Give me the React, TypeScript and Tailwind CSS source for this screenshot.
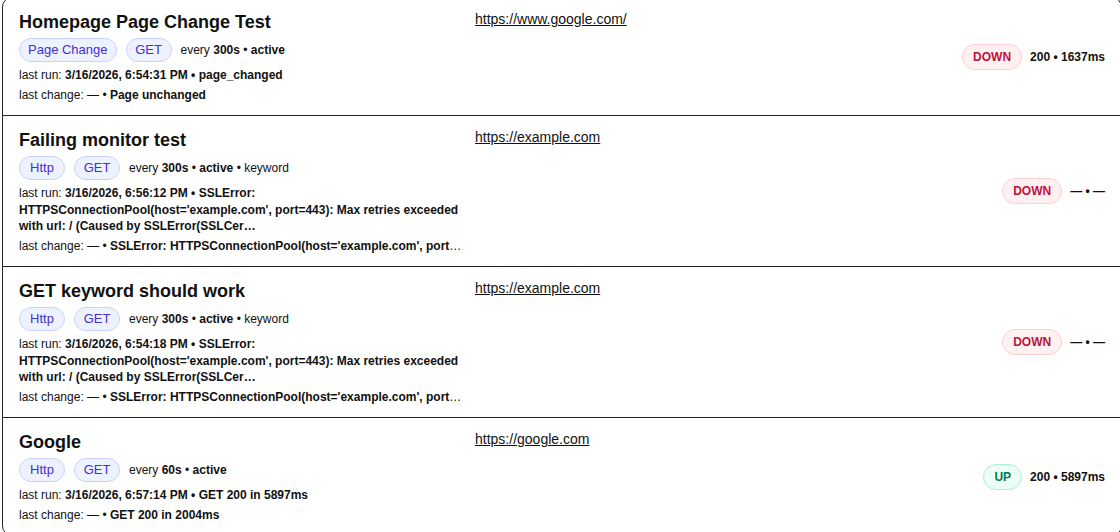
type Monitor = {
  name: string;
  kind: string;
  method: string;
  every: string;
  keyword?: boolean;
  url: string;
  lastRun: string;
  lastChange: string;
  up: boolean;
  result: string;
};

const SSL_ERR =
  "SSLError: HTTPSConnectionPool(host='example.com', port=443): Max retries exceeded with url: / (Caused by SSLError(SSLCer…";
const SSL_CHANGE =
  "SSLError: HTTPSConnectionPool(host='example.com', port=443): Max retries exceeded with url: / (Caused by SSLError(SSLCertVerificationError";

const monitors: Monitor[] = [
  {
    name: "Homepage Page Change Test",
    kind: "Page Change",
    method: "GET",
    every: "300s",
    url: "https://www.google.com/",
    lastRun: "3/16/2026, 6:54:31 PM • page_changed",
    lastChange: "Page unchanged",
    up: false,
    result: "200 • 1637ms",
  },
  {
    name: "Failing monitor test",
    kind: "Http",
    method: "GET",
    every: "300s",
    keyword: true,
    url: "https://example.com",
    lastRun: "3/16/2026, 6:56:12 PM • " + SSL_ERR,
    lastChange: SSL_CHANGE,
    up: false,
    result: "— • —",
  },
  {
    name: "GET keyword should work",
    kind: "Http",
    method: "GET",
    every: "300s",
    keyword: true,
    url: "https://example.com",
    lastRun: "3/16/2026, 6:54:18 PM • " + SSL_ERR,
    lastChange: SSL_CHANGE,
    up: false,
    result: "— • —",
  },
  {
    name: "Google",
    kind: "Http",
    method: "GET",
    every: "60s",
    url: "https://google.com",
    lastRun: "3/16/2026, 6:57:14 PM • GET 200 in 5897ms",
    lastChange: "GET 200 in 2004ms",
    up: true,
    result: "200 • 5897ms",
  },
];

function Pill({ children }: { children: React.ReactNode }) {
  return (
    <span className="min-w-[46px] rounded-full border border-[#c7d2fe] bg-[#eef2ff] px-2 py-[2px] text-center text-[13px] leading-[18px] text-[#4330d0]">
      {children}
    </span>
  );
}

function Row({ m, last }: { m: Monitor; last: boolean }) {
  return (
    <div
      className={
        "grid grid-cols-[444px_1fr_auto] gap-x-3 px-4 pt-3 pb-3 " +
        (last ? "" : "border-b border-[#222]")
      }
    >
      <div className="min-w-0">
        <h3 className="text-lg font-bold leading-6 text-[#111]">{m.name}</h3>
        <div className="mt-1 flex items-center gap-[9px]">
          <Pill>{m.kind}</Pill>
          <Pill>{m.method}</Pill>
          <span className="text-xs leading-4 text-[#111]">
            every <b>{m.every}</b> • <b>active</b>
            {m.keyword && " • keyword"}
          </span>
        </div>
        <p className="mt-[5px] text-xs leading-[16.5px] text-[#111]">
          last run: <b>{m.lastRun}</b>
        </p>
        <p className="mt-[3px] truncate text-xs leading-[16.5px] text-[#111]">
          last change: — • <b>{m.lastChange}</b>
        </p>
      </div>
      <div className="self-start text-sm leading-[18px]">
        <a href="#" className="text-[#111] underline">
          {m.url}
        </a>
      </div>
      <div className="flex items-center gap-2 self-center">
        <span
          className={
            "rounded-full border px-[10px] py-1 text-xs font-semibold leading-4 " +
            (m.up
              ? "border-[#a7f3d0] bg-[#ecfdf5] text-[#047857]"
              : "border-[#fecdd3] bg-[#fff1f2] text-[#be123c]")
          }
        >
          {m.up ? "UP" : "DOWN"}
        </span>
        <span className="text-xs font-bold text-[#111]">{m.result}</span>
      </div>
    </div>
  );
}

export default function App() {
  return (
    <div className="h-[532px] w-[1120px] overflow-hidden bg-white font-['Liberation_Sans',Arial,sans-serif]">
      <div className="-mt-[3px] ml-[2px] w-[1120px] rounded-[10px] border border-[#222]">
        {monitors.map((m, i) => (
          <Row key={m.name} m={m} last={i === monitors.length - 1} />
        ))}
      </div>
    </div>
  );
}
